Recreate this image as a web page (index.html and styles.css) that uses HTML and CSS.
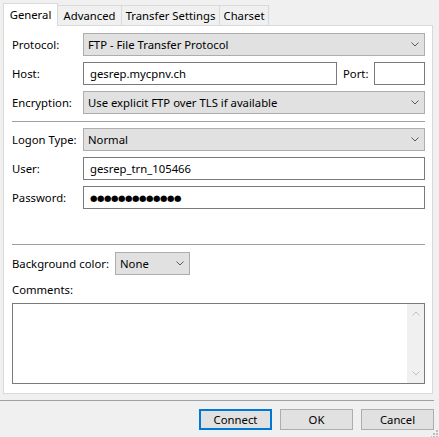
FILE: index.html
```html
<!DOCTYPE html>
<html>
<head>
<meta charset="utf-8">
<link rel="stylesheet" href="styles.css">
</head>
<body>
<div class="dialog">
  <div class="tabs">
    <div class="tab active t-general">General</div>
    <div class="tab t-adv">Advanced</div>
    <div class="tab t-transfer">Transfer Settings</div>
    <div class="tab t-charset">Charset</div>
  </div>
  <div class="panel">
    <div class="row">
      <span class="label">Protocol:</span>
      <div class="combo wide"><span class="val">FTP - File Transfer Protocol</span><svg class="chev" width="8" height="5" viewBox="0 0 8 5"><path d="M0.5 0.5L4 4L7.5 0.5" fill="none" stroke="#5a5a5a" stroke-width="1"/></svg></div>
    </div>
    <div class="row gap6">
      <span class="label">Host:</span>
      <div class="input host">gesrep.mycpnv.ch</div>
      <span class="port-label">Port:</span>
      <div class="input port"></div>
    </div>
    <div class="row gap6">
      <span class="label">Encryption:</span>
      <div class="combo wide"><span class="val">Use explicit FTP over TLS if available</span><svg class="chev" width="8" height="5" viewBox="0 0 8 5"><path d="M0.5 0.5L4 4L7.5 0.5" fill="none" stroke="#5a5a5a" stroke-width="1"/></svg></div>
    </div>
    <div class="sep sep1"></div>
    <div class="row gap6">
      <span class="label">Logon Type:</span>
      <div class="combo wide"><span class="val">Normal</span><svg class="chev" width="8" height="5" viewBox="0 0 8 5"><path d="M0.5 0.5L4 4L7.5 0.5" fill="none" stroke="#5a5a5a" stroke-width="1"/></svg></div>
    </div>
    <div class="row gap6">
      <span class="label">User:</span>
      <div class="input wide">gesrep_trn_105466</div>
    </div>
    <div class="row gap6">
      <span class="label">Password:</span>
      <div class="input wide"><span class="dots">●●●●●●●●●●●●●</span></div>
    </div>
    <div class="sep sep2"></div>
    <div class="row bgrow">
      <span class="label-auto">Background color:</span>
      <div class="combo small"><span class="val">None</span><svg class="chev" width="8" height="5" viewBox="0 0 8 5"><path d="M0.5 0.5L4 4L7.5 0.5" fill="none" stroke="#5a5a5a" stroke-width="1"/></svg></div>
    </div>
    <div class="comments-label">Comments:</div>
    <div class="textarea">
      <div class="scrollbar">
        <svg width="8" height="5" viewBox="0 0 8 5"><path d="M0.5 4.5L4 1L7.5 4.5" fill="none" stroke="#c0c0c0" stroke-width="1"/></svg>
        <svg width="8" height="5" viewBox="0 0 8 5"><path d="M0.5 0.5L4 4L7.5 0.5" fill="none" stroke="#c0c0c0" stroke-width="1"/></svg>
      </div>
    </div>
  </div>
  <div class="bottom-sep"></div>
  <div class="buttons">
    <div class="btn default">Connect</div>
    <div class="btn">OK</div>
    <div class="btn">Cancel</div>
  </div>
  <svg class="grip" width="7" height="7" viewBox="0 0 7 7">
    <rect x="5" y="0" width="2" height="2" fill="#bcbcbc"/>
    <rect x="2" y="3" width="2" height="2" fill="#bcbcbc"/>
    <rect x="5" y="3" width="2" height="2" fill="#bcbcbc"/>
    <rect x="-1" y="6" width="2" height="2" fill="#bcbcbc"/>
    <rect x="2" y="6" width="2" height="2" fill="#bcbcbc"/>
    <rect x="5" y="6" width="2" height="2" fill="#bcbcbc"/>
  </svg>
</div>
</body>
</html>
```
FILE: styles.css
```css
html, body {
  margin: 0;
  padding: 0;
}
body {
  background: #f0f0f0;
  font-family: "Noto Sans", "Open Sans", sans-serif;
  font-size: 11.3px;
  color: #000;
  width: 439px;
  height: 437px;
  overflow: hidden;
}
.dialog {
  position: relative;
  width: 439px;
  height: 437px;
}
.tabs {
  display: flex;
  align-items: flex-end;
  height: 25px;
  padding-left: 3px;
}
.tab {
  box-sizing: border-box;
  height: 20px;
  border-top: 1px solid #d9d9d9;
  border-right: 1px solid #d9d9d9;
  background: #f0f0f0;
  display: flex;
  align-items: center;
  justify-content: center;
  white-space: nowrap;
  padding-bottom: 1px;
}
.tab.active {
  height: 23px;
  margin-bottom: -1px;
  background: #fff;
  border-left: 1px solid #d9d9d9;
  position: relative;
  z-index: 1;
  padding-bottom: 2px;
}
.t-general { width: 55px; }
.t-adv { width: 64px; }
.t-transfer { width: 98px; }
.t-charset { width: 49px; }

.panel {
  box-sizing: border-box;
  margin-left: 3px;
  width: 430px;
  height: 369px;
  background: #fff;
  border: 1px solid #d9d9d9;
  padding: 7px 7px 0 8px;
}
.row {
  display: flex;
  align-items: center;
  height: 23px;
}
.gap6 { margin-top: 6px; }
.label {
  width: 71px;
  flex: none;
  white-space: nowrap;
}
.label-auto {
  white-space: nowrap;
  width: 103px;
  flex: none;
}
.combo {
  box-sizing: border-box;
  height: 23px;
  background: #e1e1e1;
  border: 1px solid #adadad;
  display: flex;
  align-items: center;
  padding-left: 4px;
  padding-right: 5px;
}
.combo .val {
  flex: 1;
  white-space: nowrap;
}
.chev { flex: none; }
.wide { width: 342px; }
.small { width: 75px; }
.input {
  box-sizing: border-box;
  height: 23px;
  background: #fff;
  border: 1px solid #7a7a7a;
  display: flex;
  align-items: center;
  padding-left: 6px;
  white-space: nowrap;
}
.host { width: 254px; }
.port-label {
  margin-left: 6px;
  width: 31px;
  flex: none;
}
.port { width: 51px; }
.dots {
  font-family: "DejaVu Sans", sans-serif;
  font-size: 8.6px;
  letter-spacing: -0.5px;
}
.sep {
  height: 1px;
  background: #a0a0a0;
  width: 413px;
}
.sep1 { margin-top: 7px; }
.sep2 { margin-top: 35px; }
.bgrow { margin-top: 7px; }
.comments-label {
  margin-top: 7px;
  height: 15px;
  line-height: 15px;
}
.textarea {
  box-sizing: border-box;
  margin-top: 6px;
  width: 413px;
  height: 81px;
  border: 1px solid #7a7a7a;
  background: #fff;
  display: flex;
  justify-content: flex-end;
}
.scrollbar {
  width: 17px;
  background: #f0f0f0;
  display: flex;
  flex-direction: column;
  align-items: center;
  justify-content: space-between;
  padding: 7px 0 7px;
}
.bottom-sep {
  margin-top: 6px;
  width: 434px;
  height: 1px;
  background: #a0a0a0;
}
.buttons {
  display: flex;
  justify-content: flex-end;
  gap: 8px;
  margin-top: 8px;
  padding-right: 5px;
}
.btn {
  box-sizing: border-box;
  width: 73px;
  height: 21px;
  background: #e1e1e1;
  border: 1px solid #adadad;
  display: flex;
  align-items: center;
  justify-content: center;
}
.btn.default {
  border: 2px solid #0078d7;
}
.grip {
  position: absolute;
  right: 1px;
  bottom: 0;
}
```
